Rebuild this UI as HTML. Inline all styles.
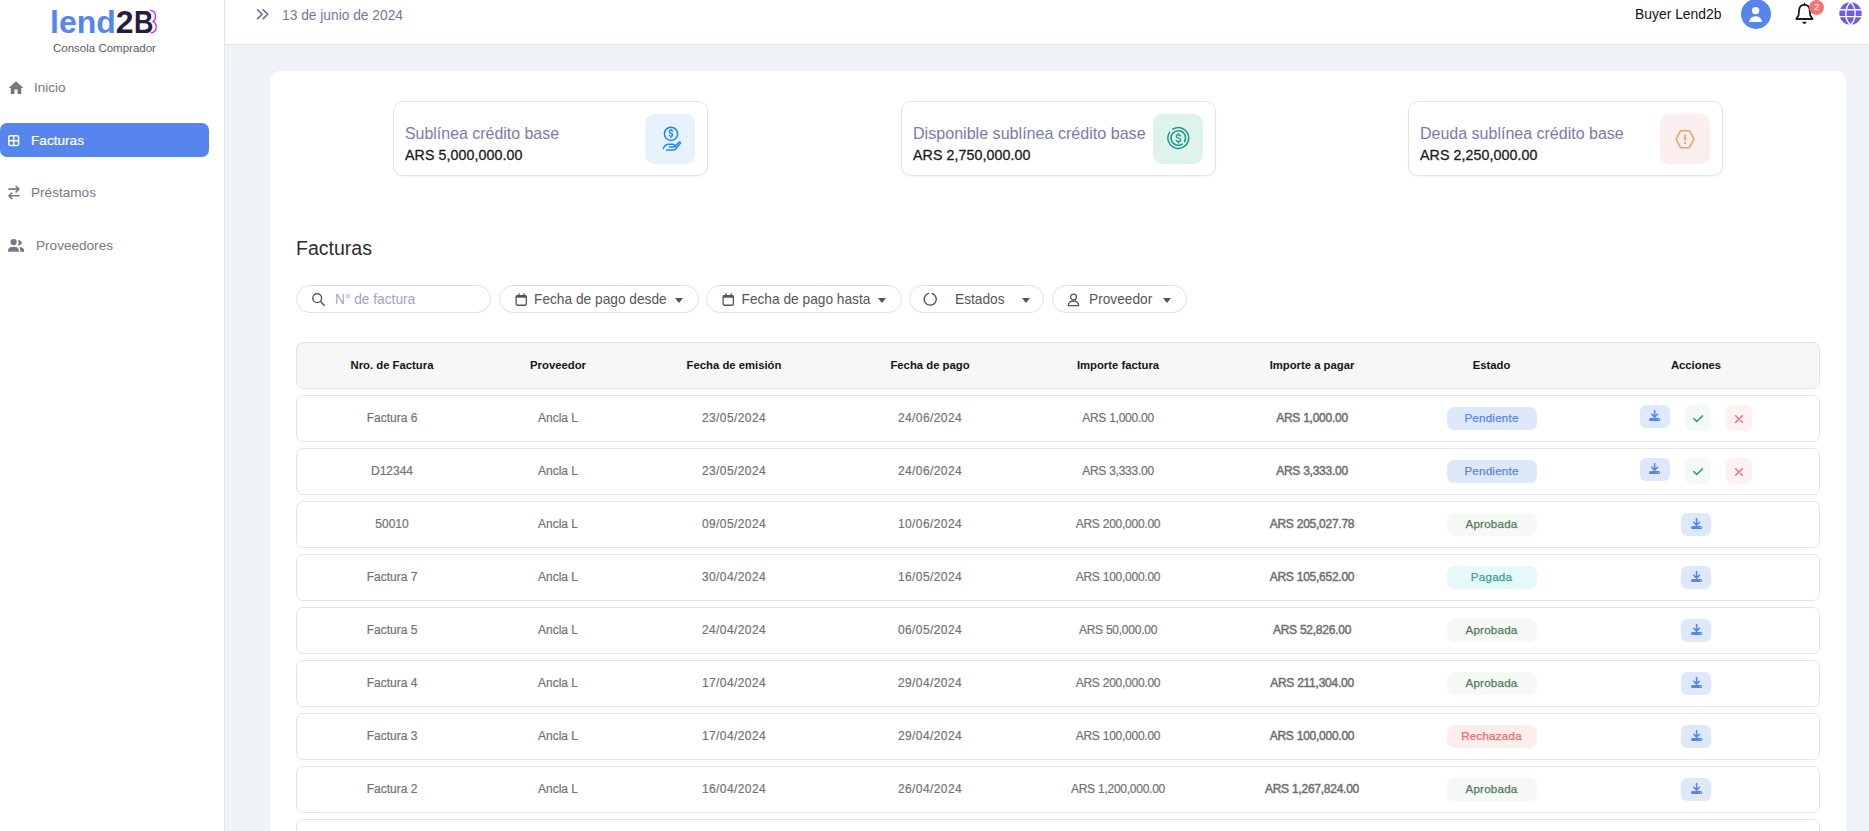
<!DOCTYPE html>
<html>
<head>
<meta charset="utf-8">
<style>
*{box-sizing:border-box;margin:0;padding:0}
html,body{width:1869px;height:831px;overflow:hidden}
body{background:#eff2f6;font-family:"Liberation Sans",sans-serif;position:relative;color:#333}
svg{display:block}
.a{position:absolute}
.t{position:absolute;white-space:nowrap;line-height:1}
#sidebar{position:absolute;left:0;top:0;width:225px;height:831px;background:#fff;border-right:1px solid #e3e5ea}
#header{position:absolute;left:225px;top:0;width:1644px;height:45px;background:#fff;border-bottom:1px solid #e3e5ea}
#card{position:absolute;left:270px;top:71px;width:1576px;height:900px;background:#fff;border-radius:10px}
.stat{position:absolute;top:101px;width:315px;height:75px;border:1px solid #e3e4ea;border-radius:10px;background:#fff;box-shadow:0 1px 2px rgba(0,0,0,0.04)}
.stat .st{position:absolute;left:11px;top:24.2px;font-size:15.93px;color:#7d7ba6;white-space:nowrap;line-height:1}
.stat .sv{position:absolute;left:11px;top:45.7px;font-size:14.2px;color:#1b1b1f;-webkit-text-stroke:0.3px #1b1b1f;letter-spacing:0.1px;white-space:nowrap;line-height:1}
.stat .ib{position:absolute;top:11.5px;width:50px;height:50px;border-radius:9px}
.filt{position:absolute;top:285px;height:28px;border:1px solid #dfe0e4;border-radius:14px;background:#fff}
.filt .l{position:absolute;top:7.4px;font-size:13.72px;color:#565656;white-space:nowrap;line-height:1}
.caret{position:absolute;top:11.5px;width:0;height:0;border-left:4.5px solid transparent;border-right:4.5px solid transparent;border-top:5px solid #555}
.row{position:absolute;left:296px;width:1524px;height:47px;border:1px solid #e4e5ea;border-radius:7px;background:#fff}
.hdr{position:absolute;left:296px;top:342px;width:1524px;height:47px;border:1px solid #e3e4e8;border-radius:7px;background:#f7f7f7}
.c{position:absolute;top:0;height:100%;display:flex;align-items:center;justify-content:center;white-space:nowrap;line-height:1}
.hdr .c{font-size:11.3px;font-weight:bold;color:#151515}
.row .c{top:-1px;font-size:12px;color:#737373;-webkit-text-stroke:0.2px #737373}
.row .d{letter-spacing:0.4px}
.badge{width:90px;height:23px;border-radius:7px;display:flex;align-items:center;justify-content:center;font-size:11.6px;letter-spacing:0.22px;padding-bottom:2px;line-height:1;-webkit-text-stroke:0.25px currentColor}
.btn{position:absolute}
.ico{position:absolute}
</style>
</head>
<body>
<div id="sidebar">
  <svg class="a" style="left:0;top:0" width="170" height="40" viewBox="0 0 170 40"><path d="M150.2 10.3C153.9 10.6 155.5 13.2 155.5 16C155.5 18.6 154.6 20.6 153.2 21.6C155.3 22.4 156.2 24.6 156.2 27C156.2 30.4 154.3 32.6 150.6 32.7" fill="none" stroke="#e21cf5" stroke-width="1.3"/></svg>
  <div class="t" style="left:50px;top:6px;font-size:32px;font-weight:bold;letter-spacing:0px"><span style="color:#5585ee">lend</span><span style="color:#231d40">2</span><span style="color:#231d40;display:inline-block;transform:scaleX(0.84);transform-origin:0 0">B</span></div>
  <div class="t" style="left:53px;top:42.8px;font-size:11.5px;color:#5a5a66">Consola Comprador</div>

  <svg class="a" style="left:6.5px;top:78.75px" width="18" height="18" viewBox="0 0 24 24"><path d="M10 20v-6h4v6h5v-8h3L12 3 2 12h3v8z" fill="#767a83"/></svg>
  <div class="t" style="left:34px;top:80.8px;font-size:13.52px;color:#767a83">Inicio</div>

  <div class="a" style="left:0;top:123px;width:209px;height:34px;background:#5585ed;border-radius:7px"></div>
  <svg class="a" style="left:8px;top:134.7px" width="12" height="12" viewBox="0 0 12 12"><rect x="0.8" y="0.8" width="9.8" height="9.8" rx="1.4" fill="none" stroke="#fff" stroke-width="1.5"/><path d="M5.7 1v9.5M1 5.7h9.5" stroke="#fff" stroke-width="1.4"/></svg>
  <div class="t" style="left:31px;top:133.5px;font-size:13.62px;color:#fff;-webkit-text-stroke:0.2px #fff">Facturas</div>

  <svg class="a" style="left:8px;top:185px" width="12" height="15" viewBox="0 0 12 15"><path d="M0.9 4.1h10M8.1 1.3l2.9 2.8L8.1 6.9M11 10.8H1M3.9 8L1 10.8 3.9 13.6" stroke="#767a83" stroke-width="1.6" fill="none" stroke-linecap="round" stroke-linejoin="round"/></svg>
  <div class="t" style="left:31px;top:185.8px;font-size:13.6px;color:#767a83">Préstamos</div>

  <svg class="a" style="left:8px;top:238px" width="17" height="14" viewBox="0 0 17 14"><circle cx="5.6" cy="4.1" r="3.1" fill="#767a83"/><path d="M9.6 1.9C12.3 1.8 13.8 3.3 13.8 4.8C13.8 6.3 12.3 7.7 9.6 7.6C10.3 6.9 10.7 5.9 10.7 4.8C10.7 3.7 10.3 2.6 9.6 1.9Z" fill="#767a83"/><path d="M0.1 13.7V12.3C0.1 10.4 1.6 9.1 3.5 9.1H7.4C9.3 9.1 10.8 10.4 10.8 12.3V13.7Z" fill="#767a83"/><path d="M11.4 9.2H12.6C14.6 9.2 16.1 10.6 16.1 12.4V13.7H12.3V12.2C12.3 11 12 10 11.4 9.2Z" fill="#767a83"/></svg>
  <div class="t" style="left:36px;top:238.8px;font-size:13.58px;color:#767a83">Proveedores</div>
</div>

<div id="header">
  <svg class="a" style="left:31px;top:8px" width="14" height="13" viewBox="0 0 14 13"><path d="M1.6 1.8L6.2 6.25 1.6 10.7M7.2 1.8L11.8 6.25 7.2 10.7" stroke="#716c94" stroke-width="1.7" fill="none" stroke-linecap="round" stroke-linejoin="round"/></svg>
  <div class="t" style="left:57px;top:8.6px;font-size:13.78px;color:#78749e">13 de junio de 2024</div>
  <div class="t" style="left:1410px;top:8.2px;font-size:13.9px;color:#151515">Buyer Lend2b</div>
  <svg class="a" style="left:1516px;top:-1px" width="30" height="30" viewBox="0 0 30 30"><circle cx="15" cy="15" r="15" fill="#5585ed"/><circle cx="14.6" cy="11.6" r="3.7" fill="#fff"/><path d="M8.3 23c0-3.4 2.8-5.8 6.3-5.8s6.3 2.4 6.3 5.8z" fill="#fff"/></svg>
  <svg class="a" style="left:1569px;top:1px" width="22" height="25" viewBox="0 0 22 25"><path d="M2.3 18H18.5L16.3 14.5C16 13.1 15.9 11 15.7 8.8C15.3 5.6 13.1 3.8 10.4 3.8C7.7 3.8 5.5 5.6 5.1 8.8C4.9 11 4.8 13.1 4.5 14.5Z" fill="none" stroke="#1d1d1d" stroke-width="1.8" stroke-linejoin="round"/><path d="M8.9 4.2L10.4 1.3 11.9 4.2Z" fill="#1d1d1d"/><path d="M8.3 20.7H12.5C12.3 22.1 11.5 22.9 10.4 22.9C9.3 22.9 8.5 22.1 8.3 20.7Z" fill="#1d1d1d"/></svg>
  <div class="a" style="left:1584.2px;top:0px;width:14.8px;height:14.8px;border-radius:50%;background:#f87272;color:#fff;font-size:9.5px;line-height:14.8px;text-align:center">2</div>
  <svg class="a" style="left:1613.5px;top:2px" width="23" height="23" viewBox="0 0 23 23"><circle cx="11.5" cy="11.5" r="11.2" fill="#6b5cf0"/><path d="M0 7.7h23M0 14.6h23" stroke="#fff" stroke-width="1.4"/><path d="M11.5 0C8.3 3 6.8 7 6.8 11.5S8.3 20 11.5 23M11.5 0C14.7 3 16.2 7 16.2 11.5S14.7 20 11.5 23" fill="none" stroke="#fff" stroke-width="1.4"/></svg>
</div>

<div id="card"></div>

<div class="stat" style="left:393px">
  <div class="st">Sublínea crédito base</div>
  <div class="sv">ARS 5,000,000.00</div>
  <div class="ib" style="left:251px;background:#e8f2fd">
    <svg class="a" style="left:17px;top:12px" width="20" height="26" viewBox="0 0 20 26"><circle cx="9" cy="7.8" r="6.6" fill="none" stroke="#1f86f0" stroke-width="1.5"/><path d="M10.6 5.2c-0.3-0.6-0.9-0.9-1.6-0.9-0.9 0-1.7 0.6-1.7 1.5 0 1.8 3.4 1.1 3.4 3 0 0.9-0.8 1.5-1.7 1.5-0.8 0-1.4-0.4-1.7-1M9 3.2v1.1M9 10.3v1.2" stroke="#1f86f0" stroke-width="1.4" fill="none" stroke-linecap="round"/><path d="M1.4 22.4C2.4 19.7 4.2 18.3 6.6 18.3H11C12 18.3 12.7 18.9 12.7 19.7C12.7 20.5 12 21.1 11 21.1H7.4M4.5 24.1h6.4c1.5 0 2.4-0.5 3.3-1.6l4-5.1c0.5-0.6 0.1-1.4-0.7-1.3-0.4 0-0.7 0.3-0.9 0.5l-3.7 4.3" stroke="#1f86f0" stroke-width="1.5" fill="none" stroke-linecap="round" stroke-linejoin="round"/></svg>
  </div>
</div>
<div class="stat" style="left:901px">
  <div class="st" style="font-size:16.1px;top:23.4px">Disponible sublínea crédito base</div>
  <div class="sv">ARS 2,750,000.00</div>
  <div class="ib" style="left:251px;background:#dff3ed">
    <svg class="a" style="left:12.5px;top:12.5px" width="25" height="25" viewBox="0 0 25 25"><path d="M6.79 3.18A10.4 10.4 0 1 1 3.58 6.34" stroke="#229a88" stroke-width="1.5" fill="none" stroke-linecap="round"/><path d="M16.38 18.05A7.3 7.3 0 1 1 18.56 15.76" stroke="#229a88" stroke-width="1.5" fill="none" stroke-linecap="round"/><path d="M14.6 9.9C14.3 9.2 13.5 8.8 12.5 8.8C11.3 8.8 10.3 9.5 10.3 10.5C10.3 12.6 14.7 11.6 14.7 13.9C14.7 15 13.7 15.6 12.4 15.6C11.4 15.6 10.6 15.2 10.2 14.4M12.4 7.4V8.8M12.4 15.6V17.1" stroke="#229a88" stroke-width="1.4" fill="none" stroke-linecap="round"/></svg>
  </div>
</div>
<div class="stat" style="left:1408px">
  <div class="st" style="font-size:16.0px">Deuda sublínea crédito base</div>
  <div class="sv">ARS 2,250,000.00</div>
  <div class="ib" style="left:251px;background:#fbeeee">
    <svg class="a" style="left:15px;top:15px" width="21" height="21" viewBox="0 0 21 21"><path d="M5.6 1.7h8.8l4.5 8.5-4.5 8.5H5.6L1.1 10.2z" fill="none" stroke="#eba46a" stroke-width="1.6" stroke-linejoin="round"/><path d="M10 6.2v4.6" stroke="#eba46a" stroke-width="1.8" stroke-linecap="round"/><rect x="9" y="13.1" width="2" height="1.8" rx="0.5" fill="#eba46a"/></svg>
  </div>
</div>

<div class="t" style="left:296px;top:238.8px;font-size:19.54px;color:#2e2e2e">Facturas</div>

<div class="filt" style="left:296px;width:195px">
  <svg class="a" style="left:14px;top:6px" width="15" height="15" viewBox="0 0 15 15"><circle cx="6.2" cy="6.2" r="4.4" fill="none" stroke="#555" stroke-width="1.4"/><path d="M9.5 9.5l3.7 3.7" stroke="#555" stroke-width="1.5" stroke-linecap="round"/></svg>
  <div class="l" style="left:38px;color:#a4a3bd">N° de factura</div>
</div>
<div class="filt" style="left:499px;width:200px">
  <svg class="a" style="left:14.5px;top:7px" width="13" height="14" viewBox="0 0 13 14"><rect x="1.15" y="2.55" width="10.2" height="9.7" rx="1.3" fill="none" stroke="#555" stroke-width="1.3"/><rect x="1.15" y="2.3" width="10.2" height="2.4" fill="#555"/><path d="M4 0.2v2.4M9.1 0.2v2.4" stroke="#555" stroke-width="1.3"/></svg>
  <div class="l" style="left:34px">Fecha de pago desde</div>
  <div class="caret" style="left:175px"></div>
</div>
<div class="filt" style="left:706px;width:196px">
  <svg class="a" style="left:14.5px;top:7px" width="13" height="14" viewBox="0 0 13 14"><rect x="1.15" y="2.55" width="10.2" height="9.7" rx="1.3" fill="none" stroke="#555" stroke-width="1.3"/><rect x="1.15" y="2.3" width="10.2" height="2.4" fill="#555"/><path d="M4 0.2v2.4M9.1 0.2v2.4" stroke="#555" stroke-width="1.3"/></svg>
  <div class="l" style="left:34.5px">Fecha de pago hasta</div>
  <div class="caret" style="left:171px"></div>
</div>
<div class="filt" style="left:909px;width:135px">
  <svg class="a" style="left:12.5px;top:5.5px" width="15" height="15" viewBox="0 0 15 15"><path d="M9.2 1.5A6 6 0 1 1 5.6 1.4" fill="none" stroke="#555" stroke-width="1.4" stroke-linecap="round"/></svg>
  <div class="l" style="left:45px">Estados</div>
  <div class="caret" style="left:112px"></div>
</div>
<div class="filt" style="left:1052px;width:135px">
  <svg class="a" style="left:13.5px;top:7px" width="13" height="14" viewBox="0 0 13 14"><circle cx="6.5" cy="4" r="2.9" fill="none" stroke="#555" stroke-width="1.3"/><path d="M1.3 12.6c0-2.6 2.2-4.6 5.2-4.6s5.2 2 5.2 4.6z" fill="none" stroke="#555" stroke-width="1.3" stroke-linejoin="round"/></svg>
  <div class="l" style="left:36px">Proveedor</div>
  <div class="caret" style="left:110px"></div>
</div>

<div class="hdr"><div class="c" style="left:5.0px;width:180px;">Nro. de Factura</div><div class="c" style="left:171.0px;width:180px;">Proveedor</div><div class="c" style="left:347.0px;width:180px;">Fecha de emisión</div><div class="c" style="left:543.0px;width:180px;">Fecha de pago</div><div class="c" style="left:731.0px;width:180px;">Importe factura</div><div class="c" style="left:925.0px;width:180px;">Importe a pagar</div><div class="c" style="left:1104.5px;width:180px;">Estado</div><div class="c" style="left:1309.0px;width:180px;">Acciones</div></div>
<div class="row" style="top:395px"><div class="c" style="left:5.0px;width:180px;">Factura 6</div><div class="c" style="left:171.0px;width:180px;">Ancla L</div><div class="c d" style="left:347.0px;width:180px;">23/05/2024</div><div class="c d" style="left:543.0px;width:180px;">24/06/2024</div><div class="c" style="left:731.0px;width:180px;letter-spacing:-0.25px;">ARS 1,000.00</div><div class="c" style="left:925.0px;width:180px;-webkit-text-stroke:0.45px #6e6e6e;color:#6e6e6e;letter-spacing:-0.25px;">ARS 1,000.00</div><div class="c" style="left:1104.5px;width:180px;top:0;"><div class="badge" style="background:#dde9fb;color:#5a84e8">Pendiente</div></div><div class="btn" style="left:1343px;top:9px;width:30px;height:23px;background:#dde9fb;border-radius:6px"><div class="ico" style="left:9px;top:5px"><svg width="12" height="12" viewBox="0 0 12 12"><path d="M5.6 0.7v6.2M2.8 4.3l2.8 2.8 2.8-2.8" stroke="#5585ed" stroke-width="1.6" fill="none" stroke-linecap="round" stroke-linejoin="round"/><rect x="0" y="8" width="11.2" height="3" rx="1.5" fill="#5585ed"/><circle cx="9.5" cy="9.5" r="0.6" fill="#dde9fb"/></svg></div></div><div class="btn" style="left:1388px;top:9px;width:26px;height:26px;background:#f5f9f6;border-radius:7px"><div class="ico" style="left:7.5px;top:9.5px"><svg width="11" height="8" viewBox="0 0 11 8"><path d="M0.8 3.6l2.9 2.9L9.5 0.9" stroke="#2c9d8d" stroke-width="1.5" fill="none" stroke-linecap="round" stroke-linejoin="round"/></svg></div></div><div class="btn" style="left:1429px;top:9px;width:26px;height:26px;background:#fef1f1;border-radius:7px"><div class="ico" style="left:9.3px;top:9.6px"><svg width="8" height="8" viewBox="0 0 8 8"><path d="M0.7 0.7l6.6 6.6M7.3 0.7L0.7 7.3" stroke="#f26b6b" stroke-width="1.4" fill="none" stroke-linecap="round"/></svg></div></div></div>
<div class="row" style="top:448px"><div class="c" style="left:5.0px;width:180px;">D12344</div><div class="c" style="left:171.0px;width:180px;">Ancla L</div><div class="c d" style="left:347.0px;width:180px;">23/05/2024</div><div class="c d" style="left:543.0px;width:180px;">24/06/2024</div><div class="c" style="left:731.0px;width:180px;letter-spacing:-0.25px;">ARS 3,333.00</div><div class="c" style="left:925.0px;width:180px;-webkit-text-stroke:0.45px #6e6e6e;color:#6e6e6e;letter-spacing:-0.25px;">ARS 3,333.00</div><div class="c" style="left:1104.5px;width:180px;top:0;"><div class="badge" style="background:#dde9fb;color:#5a84e8">Pendiente</div></div><div class="btn" style="left:1343px;top:9px;width:30px;height:23px;background:#dde9fb;border-radius:6px"><div class="ico" style="left:9px;top:5px"><svg width="12" height="12" viewBox="0 0 12 12"><path d="M5.6 0.7v6.2M2.8 4.3l2.8 2.8 2.8-2.8" stroke="#5585ed" stroke-width="1.6" fill="none" stroke-linecap="round" stroke-linejoin="round"/><rect x="0" y="8" width="11.2" height="3" rx="1.5" fill="#5585ed"/><circle cx="9.5" cy="9.5" r="0.6" fill="#dde9fb"/></svg></div></div><div class="btn" style="left:1388px;top:9px;width:26px;height:26px;background:#f5f9f6;border-radius:7px"><div class="ico" style="left:7.5px;top:9.5px"><svg width="11" height="8" viewBox="0 0 11 8"><path d="M0.8 3.6l2.9 2.9L9.5 0.9" stroke="#2c9d8d" stroke-width="1.5" fill="none" stroke-linecap="round" stroke-linejoin="round"/></svg></div></div><div class="btn" style="left:1429px;top:9px;width:26px;height:26px;background:#fef1f1;border-radius:7px"><div class="ico" style="left:9.3px;top:9.6px"><svg width="8" height="8" viewBox="0 0 8 8"><path d="M0.7 0.7l6.6 6.6M7.3 0.7L0.7 7.3" stroke="#f26b6b" stroke-width="1.4" fill="none" stroke-linecap="round"/></svg></div></div></div>
<div class="row" style="top:501px"><div class="c" style="left:5.0px;width:180px;">50010</div><div class="c" style="left:171.0px;width:180px;">Ancla L</div><div class="c d" style="left:347.0px;width:180px;">09/05/2024</div><div class="c d" style="left:543.0px;width:180px;">10/06/2024</div><div class="c" style="left:731.0px;width:180px;letter-spacing:-0.25px;">ARS 200,000.00</div><div class="c" style="left:925.0px;width:180px;-webkit-text-stroke:0.45px #6e6e6e;color:#6e6e6e;letter-spacing:-0.25px;">ARS 205,027.78</div><div class="c" style="left:1104.5px;width:180px;top:0;"><div class="badge" style="background:#f5f8f5;color:#4f7a5c">Aprobada</div></div><div class="btn" style="left:1384px;top:11px;width:30px;height:23px;background:#dde9fb;border-radius:6px"><div class="ico" style="left:10px;top:5px"><svg width="12" height="12" viewBox="0 0 12 12"><path d="M5.6 0.7v6.2M2.8 4.3l2.8 2.8 2.8-2.8" stroke="#5585ed" stroke-width="1.6" fill="none" stroke-linecap="round" stroke-linejoin="round"/><rect x="0" y="8" width="11.2" height="3" rx="1.5" fill="#5585ed"/><circle cx="9.5" cy="9.5" r="0.6" fill="#dde9fb"/></svg></div></div></div>
<div class="row" style="top:554px"><div class="c" style="left:5.0px;width:180px;">Factura 7</div><div class="c" style="left:171.0px;width:180px;">Ancla L</div><div class="c d" style="left:347.0px;width:180px;">30/04/2024</div><div class="c d" style="left:543.0px;width:180px;">16/05/2024</div><div class="c" style="left:731.0px;width:180px;letter-spacing:-0.25px;">ARS 100,000.00</div><div class="c" style="left:925.0px;width:180px;-webkit-text-stroke:0.45px #6e6e6e;color:#6e6e6e;letter-spacing:-0.25px;">ARS 105,652.00</div><div class="c" style="left:1104.5px;width:180px;top:0;"><div class="badge" style="background:#e5faf8;color:#3b9e90">Pagada</div></div><div class="btn" style="left:1384px;top:11px;width:30px;height:23px;background:#dde9fb;border-radius:6px"><div class="ico" style="left:10px;top:5px"><svg width="12" height="12" viewBox="0 0 12 12"><path d="M5.6 0.7v6.2M2.8 4.3l2.8 2.8 2.8-2.8" stroke="#5585ed" stroke-width="1.6" fill="none" stroke-linecap="round" stroke-linejoin="round"/><rect x="0" y="8" width="11.2" height="3" rx="1.5" fill="#5585ed"/><circle cx="9.5" cy="9.5" r="0.6" fill="#dde9fb"/></svg></div></div></div>
<div class="row" style="top:607px"><div class="c" style="left:5.0px;width:180px;">Factura 5</div><div class="c" style="left:171.0px;width:180px;">Ancla L</div><div class="c d" style="left:347.0px;width:180px;">24/04/2024</div><div class="c d" style="left:543.0px;width:180px;">06/05/2024</div><div class="c" style="left:731.0px;width:180px;letter-spacing:-0.25px;">ARS 50,000.00</div><div class="c" style="left:925.0px;width:180px;-webkit-text-stroke:0.45px #6e6e6e;color:#6e6e6e;letter-spacing:-0.25px;">ARS 52,826.00</div><div class="c" style="left:1104.5px;width:180px;top:0;"><div class="badge" style="background:#f5f8f5;color:#4f7a5c">Aprobada</div></div><div class="btn" style="left:1384px;top:11px;width:30px;height:23px;background:#dde9fb;border-radius:6px"><div class="ico" style="left:10px;top:5px"><svg width="12" height="12" viewBox="0 0 12 12"><path d="M5.6 0.7v6.2M2.8 4.3l2.8 2.8 2.8-2.8" stroke="#5585ed" stroke-width="1.6" fill="none" stroke-linecap="round" stroke-linejoin="round"/><rect x="0" y="8" width="11.2" height="3" rx="1.5" fill="#5585ed"/><circle cx="9.5" cy="9.5" r="0.6" fill="#dde9fb"/></svg></div></div></div>
<div class="row" style="top:660px"><div class="c" style="left:5.0px;width:180px;">Factura 4</div><div class="c" style="left:171.0px;width:180px;">Ancla L</div><div class="c d" style="left:347.0px;width:180px;">17/04/2024</div><div class="c d" style="left:543.0px;width:180px;">29/04/2024</div><div class="c" style="left:731.0px;width:180px;letter-spacing:-0.25px;">ARS 200,000.00</div><div class="c" style="left:925.0px;width:180px;-webkit-text-stroke:0.45px #6e6e6e;color:#6e6e6e;letter-spacing:-0.25px;">ARS 211,304.00</div><div class="c" style="left:1104.5px;width:180px;top:0;"><div class="badge" style="background:#f5f8f5;color:#4f7a5c">Aprobada</div></div><div class="btn" style="left:1384px;top:11px;width:30px;height:23px;background:#dde9fb;border-radius:6px"><div class="ico" style="left:10px;top:5px"><svg width="12" height="12" viewBox="0 0 12 12"><path d="M5.6 0.7v6.2M2.8 4.3l2.8 2.8 2.8-2.8" stroke="#5585ed" stroke-width="1.6" fill="none" stroke-linecap="round" stroke-linejoin="round"/><rect x="0" y="8" width="11.2" height="3" rx="1.5" fill="#5585ed"/><circle cx="9.5" cy="9.5" r="0.6" fill="#dde9fb"/></svg></div></div></div>
<div class="row" style="top:713px"><div class="c" style="left:5.0px;width:180px;">Factura 3</div><div class="c" style="left:171.0px;width:180px;">Ancla L</div><div class="c d" style="left:347.0px;width:180px;">17/04/2024</div><div class="c d" style="left:543.0px;width:180px;">29/04/2024</div><div class="c" style="left:731.0px;width:180px;letter-spacing:-0.25px;">ARS 100,000.00</div><div class="c" style="left:925.0px;width:180px;-webkit-text-stroke:0.45px #6e6e6e;color:#6e6e6e;letter-spacing:-0.25px;">ARS 100,000.00</div><div class="c" style="left:1104.5px;width:180px;top:0;"><div class="badge" style="background:#fdeeee;color:#ef6b6b">Rechazada</div></div><div class="btn" style="left:1384px;top:11px;width:30px;height:23px;background:#dde9fb;border-radius:6px"><div class="ico" style="left:10px;top:5px"><svg width="12" height="12" viewBox="0 0 12 12"><path d="M5.6 0.7v6.2M2.8 4.3l2.8 2.8 2.8-2.8" stroke="#5585ed" stroke-width="1.6" fill="none" stroke-linecap="round" stroke-linejoin="round"/><rect x="0" y="8" width="11.2" height="3" rx="1.5" fill="#5585ed"/><circle cx="9.5" cy="9.5" r="0.6" fill="#dde9fb"/></svg></div></div></div>
<div class="row" style="top:766px"><div class="c" style="left:5.0px;width:180px;">Factura 2</div><div class="c" style="left:171.0px;width:180px;">Ancla L</div><div class="c d" style="left:347.0px;width:180px;">16/04/2024</div><div class="c d" style="left:543.0px;width:180px;">26/04/2024</div><div class="c" style="left:731.0px;width:180px;letter-spacing:-0.25px;">ARS 1,200,000.00</div><div class="c" style="left:925.0px;width:180px;-webkit-text-stroke:0.45px #6e6e6e;color:#6e6e6e;letter-spacing:-0.25px;">ARS 1,267,824.00</div><div class="c" style="left:1104.5px;width:180px;top:0;"><div class="badge" style="background:#f5f8f5;color:#4f7a5c">Aprobada</div></div><div class="btn" style="left:1384px;top:11px;width:30px;height:23px;background:#dde9fb;border-radius:6px"><div class="ico" style="left:10px;top:5px"><svg width="12" height="12" viewBox="0 0 12 12"><path d="M5.6 0.7v6.2M2.8 4.3l2.8 2.8 2.8-2.8" stroke="#5585ed" stroke-width="1.6" fill="none" stroke-linecap="round" stroke-linejoin="round"/><rect x="0" y="8" width="11.2" height="3" rx="1.5" fill="#5585ed"/><circle cx="9.5" cy="9.5" r="0.6" fill="#dde9fb"/></svg></div></div></div>
<div class="row" style="top:819px"><div class="c" style="left:5.0px;width:180px;">Factura 1</div><div class="c" style="left:171.0px;width:180px;">Ancla L</div><div class="c d" style="left:347.0px;width:180px;">16/04/2024</div><div class="c d" style="left:543.0px;width:180px;">26/04/2024</div><div class="c" style="left:731.0px;width:180px;letter-spacing:-0.25px;">ARS 1,200,000.00</div><div class="c" style="left:925.0px;width:180px;-webkit-text-stroke:0.45px #6e6e6e;color:#6e6e6e;letter-spacing:-0.25px;">ARS 1,267,824.00</div><div class="c" style="left:1104.5px;width:180px;top:0;"><div class="badge" style="background:#f5f8f5;color:#4f7a5c">Aprobada</div></div><div class="btn" style="left:1384px;top:11px;width:30px;height:23px;background:#dde9fb;border-radius:6px"><div class="ico" style="left:10px;top:5px"><svg width="12" height="12" viewBox="0 0 12 12"><path d="M5.6 0.7v6.2M2.8 4.3l2.8 2.8 2.8-2.8" stroke="#5585ed" stroke-width="1.6" fill="none" stroke-linecap="round" stroke-linejoin="round"/><rect x="0" y="8" width="11.2" height="3" rx="1.5" fill="#5585ed"/><circle cx="9.5" cy="9.5" r="0.6" fill="#dde9fb"/></svg></div></div></div>
</body>
</html>
